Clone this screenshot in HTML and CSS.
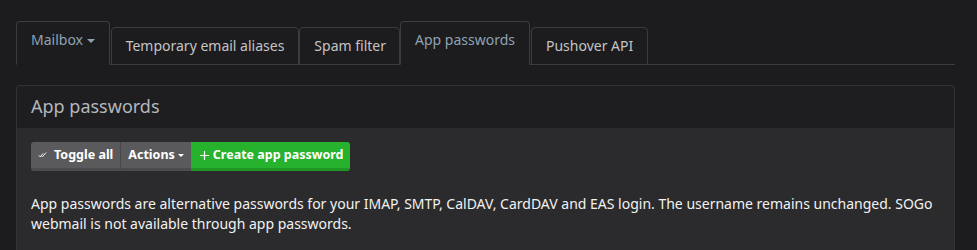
FILE: index.html
```html
<!DOCTYPE html>
<html lang="en">
<head>
<meta charset="utf-8">
<title>App passwords</title>
<link rel="stylesheet" href="styles.css">
</head>
<body>
<div class="container">
  <ul class="tabs">
    <li class="tab active">Mailbox <span class="caret"></span></li>
    <li class="tab">Temporary email aliases</li>
    <li class="tab">Spam filter</li>
    <li class="tab active">App passwords</li>
    <li class="tab">Pushover API</li>
  </ul>
  <div class="panel">
    <div class="panel-heading">App passwords</div>
    <div class="panel-body">
      <div class="btn-group">
        <span class="btn btn-grey"><svg class="ico-check" viewBox="0 0 16 16" width="10" height="10"><path d="M1 8.5l2.5 2.5L8 5.5M6 10l1 1 6-7" fill="none" stroke="#fff" stroke-width="1.5"/></svg>Toggle all</span>
        <span class="btn btn-grey btn-sep">Actions <span class="caret"></span></span>
        <span class="btn btn-green"><svg class="ico-plus" viewBox="0 0 12 12" width="11" height="11"><path d="M6 1v10M1 6h10" stroke="#fff" stroke-width="1.3"/></svg>Create app password</span>
      </div>
      <p class="desc">App passwords are alternative passwords for your IMAP, SMTP, CalDAV, CardDAV and EAS login. The username remains unchanged. SOGo webmail is not available through app passwords.</p>
    </div>
  </div>
</div>
</body>
</html>
```

FILE: styles.css
```css
html, body {
  margin: 0;
  padding: 0;
  background: #1c1c1e;
  height: 100%;
  overflow: hidden;
}
body {
  font-family: "Noto Sans", "Open Sans", sans-serif;
  font-size: 14px;
  line-height: 20px;
  color: #e8e8e8;
}
.container {
  padding: 21px 22px 0 16px;
}
.tabs {
  list-style: none;
  margin: 0;
  padding: 0;
  display: flex;
  align-items: flex-end;
  border-bottom: 1px solid #3c3c3e;
}
.tab {
  padding: 8px 14px;
  margin-right: 1px;
  margin-bottom: -1px;
  border: 1px solid #3c3c3e;
  border-radius: 4px 4px 0 0;
  color: #c4c4c6;
  white-space: nowrap;
}
.tab:nth-child(2) {
  margin-right: 0;
}
.tab:nth-child(3) {
  margin-right: 0;
  padding-right: 13px;
}
.tab.active {
  padding-bottom: 14px;
  border-bottom-color: #1c1c1e;
  color: #8fa1b5;
}
.caret {
  display: inline-block;
  width: 0;
  height: 0;
  margin-left: 0;
  vertical-align: middle;
  border-top: 4px solid currentColor;
  border-left: 4px solid transparent;
  border-right: 4px solid transparent;
}
.panel {
  margin-top: 20px;
  border: 1px solid #323234;
  border-radius: 4px 4px 0 0;
  background: #2b2b2d;
}
.panel-heading {
  background: #1e1e20;
  padding: 9px 14px 10px;
  font-size: 18px;
  line-height: 23px;
  color: #b3b7be;
  border-radius: 4px 4px 0 0;
}
.panel-body {
  padding: 14px 14px 20px;
}
.btn-group {
  display: inline-flex;
  border-radius: 3px;
  overflow: hidden;
}
.btn {
  display: inline-flex;
  align-items: center;
  height: 29px;
  box-sizing: border-box;
  padding: 0 7px 3px;
  font-size: 12.5px;
  font-weight: bold;
  color: #fff;
  box-shadow: inset 0 -3px 0 rgba(0,0,0,0.15);
}
.btn-grey {
  background: #5a5a5c;
}
.btn-sep {
  border-left: 1px solid #47474a;
}
.btn-sep .caret {
  margin-left: 3px;
  border-top-width: 3px;
  border-left-width: 3px;
  border-right-width: 3px;
}
.btn-green {
  background: #26b22c;
  padding-left: 8px;
  padding-right: 6px;
}
.ico-check {
  margin-right: 6px;
}
.ico-plus {
  margin-right: 3px;
}
.desc {
  margin: 23px 0 0;
  color: #f2f2f2;
}
```
